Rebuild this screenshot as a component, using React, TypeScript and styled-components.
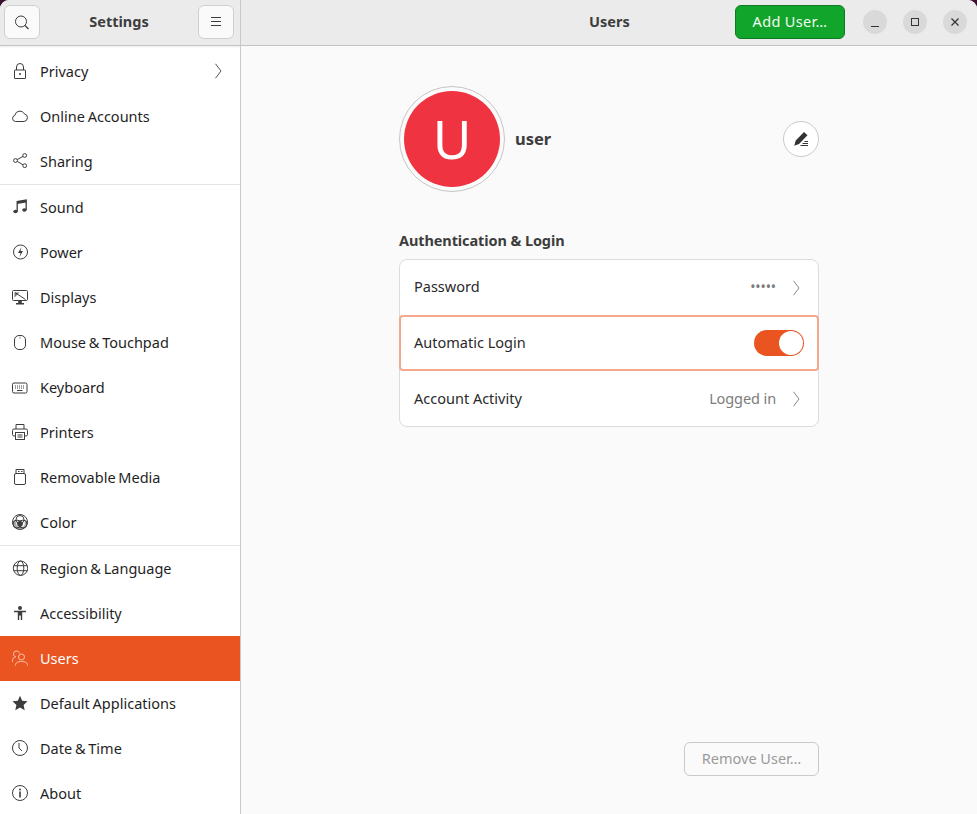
import React from "react";
import styled, { createGlobalStyle } from "styled-components";

const GlobalStyle = createGlobalStyle`
  html, body {
    margin: 0;
    padding: 0;
    height: 100%;
    background: #3b0f2f;
  }
  #root {
    height: 100%;
  }
`;

const sharedIcon = { width: 16, height: 16, viewBox: "0 0 16 16", fill: "none", stroke: "currentColor", strokeWidth: 1 };

const LockIcon = () => (
  <svg {...sharedIcon}>
    <path d="M4.500 7V4a3.500 3.500 0 0 1 7 0v3" />
    <rect x="2.500" y="7" width="11" height="8.500" rx="0.500" />
    <circle cx="8" cy="11" r="1" fill="currentColor" stroke="none" />
  </svg>
);
const CloudIcon = () => (
  <svg {...sharedIcon}>
    <path d="M3.500 13.500a3.100 3.100 0 0 1-.6-6.100A5 5 0 0 1 12.300 5.800a3.900 3.900 0 0 1-.3 7.700Z" />
  </svg>
);
const ShareIcon = () => (
  <svg {...sharedIcon}>
    <circle cx="3.500" cy="7.500" r="1.900" />
    <circle cx="12.700" cy="2.500" r="1.900" />
    <circle cx="12.700" cy="12.700" r="1.900" />
    <path d="M5.200 6.600 11 3.400M5.200 8.400l5.800 3.400" />
  </svg>
);
const NoteIcon = () => (
  <svg {...sharedIcon} strokeWidth={1.300}>
    <path d="M5.200 12.500V2.500l9-1.500v10" />
    <path d="M5.200 2.500l9-1.500v2.500l-9 1.500Z" fill="currentColor" stroke="none" />
    <ellipse cx="3.500" cy="12.500" rx="2.200" ry="1.700" fill="currentColor" stroke="none" />
    <ellipse cx="12.400" cy="11" rx="2.200" ry="1.700" fill="currentColor" stroke="none" />
  </svg>
);
const PowerIcon = () => (
  <svg {...sharedIcon}>
    <circle cx="8.500" cy="8" r="7" />
    <path d="M9.500 3 6 9h2.500l-1 4L11 7H8.500Z" fill="currentColor" stroke="none" />
  </svg>
);
const DisplayIcon = () => (
  <svg {...sharedIcon}>
    <rect x="0.500" y="1.500" width="15" height="10" rx="1" />
    <path d="M2.500 3.500h5l-5 5Z" fill="currentColor" stroke="none" opacity="0.7" />
    <path d="M3 3.500 13.500 10.500" />
    <path d="M4 15.500h8v-1.500H9.800v-2H6.200v2H4Z" fill="currentColor" stroke="none" />
  </svg>
);
const MouseIcon = () => (
  <svg {...sharedIcon}>
    <rect x="2.500" y="1.500" width="11" height="14" rx="4.500" />
    <path d="M8 2.500v2.500" opacity="0.5" />
  </svg>
);
const KeyboardIcon = () => (
  <svg {...sharedIcon}>
    <rect x="0.500" y="4" width="14.500" height="10" rx="1.500" />
    <path d="M3 7h9.500M3 9h9.500" strokeDasharray="1 1" />
    <path d="M5 11.500h5.500" />
  </svg>
);
const PrinterIcon = () => (
  <svg {...sharedIcon}>
    <path d="M4 5V.5h8V5" />
    <path d="M3.500 12H2a1.500 1.500 0 0 1-1.500-1.500V6.500A1.500 1.500 0 0 1 2 5h12a1.500 1.500 0 0 1 1.500 1.500v4A1.500 1.500 0 0 1 14 12h-1.500" />
    <rect x="3.500" y="8.500" width="9" height="7" />
    <path d="M5.500 11h5M5.500 13h5" />
  </svg>
);
const UsbIcon = () => (
  <svg {...sharedIcon}>
    <rect x="2.500" y="4.500" width="11" height="11" rx="1.500" />
    <path d="M4 4.500V.5h8v4" />
    <path d="M6 2.500h1.500M9 2.500h1.500" />
  </svg>
);
const ColorIcon = () => (
  <svg {...sharedIcon}>
    <circle cx="8" cy="8" r="7.500" />
    <circle cx="8" cy="5.500" r="4" />
    <circle cx="5" cy="10" r="4" />
    <circle cx="11" cy="10" r="4" />
    <path d="M2 6.500 1 8.500a7 7 0 0 0 7 6.800 7 7 0 0 0 7-6.800l-1-2-1.600 1.200a4 4 0 0 1-2 5.200H6.600a4 4 0 0 1-2-5.200Z" fill="currentColor" stroke="none" opacity="0.45" />
    <path d="M8 6.500a4 4 0 0 1 3 3.500 4 4 0 0 1-3 3.300A4 4 0 0 1 5 10a4 4 0 0 1 3-3.500Z" fill="currentColor" stroke="none" />
  </svg>
);
const GlobeIcon = () => (
  <svg {...sharedIcon}>
    <circle cx="8.500" cy="8.200" r="7.200" />
    <ellipse cx="8.500" cy="8.200" rx="3.300" ry="7.200" />
    <path d="M1.800 5.700h13.400M1.800 10.700h13.400" />
  </svg>
);
const AccessIcon = () => (
  <svg width="16" height="16" viewBox="0 0 16 16" fill="currentColor">
    <circle cx="8" cy="3" r="2" />
    <path d="M2 5.800h12v1.500h-3.800V15H8.800v-4.500H7.200V15H5.800V7.300H2Z" />
  </svg>
);
const UsersIcon = () => (
  <svg {...sharedIcon}>
    <circle cx="9.500" cy="7" r="3" />
    <path d="M3.500 15.500v-.6c0-2 2-3.400 6-3.400s6 1.400 6 3.400v.6" />
    <path d="M7.500 3.300A3 3 0 0 0 4.200 1a3 3 0 0 0-.5 5.900C2 7.300.5 8.400.5 10.500V12" />
  </svg>
);
const StarIcon = () => (
  <svg width="16" height="16" viewBox="0 0 16 16" fill="currentColor">
    <path d="M8 .8l2.200 4.900 5.300.6-3.900 3.600 1.100 5.300L8 12.500l-4.700 2.700 1.100-5.300L.5 6.300l5.300-.6Z" />
  </svg>
);
const ClockIcon = () => (
  <svg {...sharedIcon}>
    <circle cx="8" cy="8" r="7.500" />
    <path d="M7 3v5l3 3" />
  </svg>
);
const InfoIcon = () => (
  <svg {...sharedIcon}>
    <circle cx="8" cy="8" r="7.500" />
    <circle cx="8" cy="4.500" r="1" fill="currentColor" stroke="none" />
    <path d="M8 6.500v6" strokeWidth={1.600} />
  </svg>
);
const ChevronIcon = () => (
  <svg width="16" height="16" viewBox="0 0 16 16" fill="none" stroke="currentColor">
    <path d="M5.500 .8 11 8l-5.500 7.200" />
  </svg>
);

type NavItem = { label: string; icon: React.ReactNode; chevron?: boolean; active?: boolean };

const navGroups: NavItem[][] = [
  [
    { label: "Privacy", icon: <LockIcon />, chevron: true },
    { label: "Online Accounts", icon: <CloudIcon /> },
    { label: "Sharing", icon: <ShareIcon /> },
  ],
  [
    { label: "Sound", icon: <NoteIcon /> },
    { label: "Power", icon: <PowerIcon /> },
    { label: "Displays", icon: <DisplayIcon /> },
    { label: "Mouse & Touchpad", icon: <MouseIcon /> },
    { label: "Keyboard", icon: <KeyboardIcon /> },
    { label: "Printers", icon: <PrinterIcon /> },
    { label: "Removable Media", icon: <UsbIcon /> },
    { label: "Color", icon: <ColorIcon /> },
  ],
  [
    { label: "Region & Language", icon: <GlobeIcon /> },
    { label: "Accessibility", icon: <AccessIcon /> },
    { label: "Users", icon: <UsersIcon />, active: true },
    { label: "Default Applications", icon: <StarIcon /> },
    { label: "Date & Time", icon: <ClockIcon /> },
    { label: "About", icon: <InfoIcon /> },
  ],
];

export default function App() {
  return (
    <>
      <GlobalStyle />
      <Window>
        <LeftHeader>
          <HeaderButton aria-label="Search">
            <svg width="16" height="16" viewBox="0 0 16 16" fill="none" stroke="#3d3d3d">
              <circle cx="7" cy="7.500" r="5.500" />
              <path d="m11 11.500 3.500 3.500" strokeWidth="1.300" />
            </svg>
          </HeaderButton>
          <HeaderTitle>Settings</HeaderTitle>
          <HeaderButton aria-label="Menu">
            <svg width="16" height="16" viewBox="0 0 16 16" stroke="#3d3d3d">
              <path d="M3 3.500h10M3 7.500h10M3 11.500h10" />
            </svg>
          </HeaderButton>
        </LeftHeader>
        <RightHeader>
          <CenterTitle>Users</CenterTitle>
          <AddButton>Add User…</AddButton>
          <WindowControls>
            <RoundControl aria-label="Minimize">
              <svg width="16" height="16" viewBox="0 0 16 16" stroke="#333">
                <path d="M4 12.500h8" />
              </svg>
            </RoundControl>
            <RoundControl aria-label="Maximize">
              <svg width="16" height="16" viewBox="0 0 16 16" fill="none" stroke="#333">
                <rect x="4.500" y="4.500" width="7" height="7" />
              </svg>
            </RoundControl>
            <RoundControl aria-label="Close">
              <svg width="16" height="16" viewBox="0 0 16 16" stroke="#333" strokeWidth="1.200">
                <path d="m4.500 4.500 7 7M11.500 4.500l-7 7" />
              </svg>
            </RoundControl>
          </WindowControls>
        </RightHeader>

        <Sidebar>
          {navGroups.map((group, i) => (
            <NavGroup key={i}>
              {group.map((item) => (
                <NavRow key={item.label} $active={item.active}>
                  <NavIcon $active={item.active}>{item.icon}</NavIcon>
                  <NavLabel>{item.label}</NavLabel>
                  {item.chevron && (
                    <NavChevron>
                      <ChevronIcon />
                    </NavChevron>
                  )}
                </NavRow>
              ))}
            </NavGroup>
          ))}
        </Sidebar>

        <Content>
          <Column>
            <ProfileRow>
              <AvatarRing>
                <Avatar>U</Avatar>
              </AvatarRing>
              <UserName>user</UserName>
              <EditButton aria-label="Edit name">
                <svg width="16" height="16" viewBox="0 0 16 16">
                  <path d="M11 1 14.500 4.200 6 13 1.200 14.800 2.800 9.500Z" fill="#333" />
                  <path d="M7.500 14.500h7.500M9.500 12.500h5.500M11.500 10.500h3.500" stroke="#333" />
                </svg>
              </EditButton>
            </ProfileRow>
            <SectionTitle>Authentication &amp; Login</SectionTitle>
            <ListBox>
              <ListRow>
                <RowLabel $raised>Password</RowLabel>
                <PasswordDots aria-label="password">•••••</PasswordDots>
                <RowChevron>
                  <ChevronIcon />
                </RowChevron>
              </ListRow>
              <HighlightRow>
                <RowLabel>Automatic Login</RowLabel>
                <Toggle>
                  <ToggleKnob />
                </Toggle>
              </HighlightRow>
              <ListRow>
                <RowLabel>Account Activity</RowLabel>
                <RowValue>Logged in</RowValue>
                <RowChevron>
                  <ChevronIcon />
                </RowChevron>
              </ListRow>
            </ListBox>
            <Spacer />
            <RemoveRow>
              <RemoveButton disabled>Remove User…</RemoveButton>
            </RemoveRow>
          </Column>
        </Content>
      </Window>
    </>
  );
}

const fontStack = `"Noto Sans", "Open Sans", sans-serif`;

const Window = styled.div`
  width: 977px;
  height: 814px;
  overflow: hidden;
  display: grid;
  grid-template-columns: 241px 1fr;
  grid-template-rows: 46px 1fr;
  font-family: ${fontStack};
  font-size: 14.5px;
  color: #303030;
  background: #fafafa;
  border-radius: 9px 9px 0 0;
`;

const LeftHeader = styled.header`
  display: flex;
  align-items: center;
  justify-content: space-between;
  padding: 0 6px 1px 4px;
  background: #ebebeb;
  border-bottom: 1px solid #c4c4c4;
  border-right: 1px solid #c8c8c8;
  box-sizing: border-box;
`;

const RightHeader = styled.header`
  position: relative;
  display: flex;
  align-items: center;
  justify-content: flex-end;
  padding: 0 10px 1px 0;
  background: #ebebeb;
  border-bottom: 1px solid #c4c4c4;
  box-sizing: border-box;
`;

const HeaderButton = styled.button`
  width: 36px;
  height: 34px;
  padding: 0;
  display: flex;
  align-items: center;
  justify-content: center;
  background: #fafafa;
  border: 1px solid #cfcfcf;
  border-radius: 6px;
`;

const HeaderTitle = styled.h1`
  margin: 0 0 2px;
  font-size: 14.5px;
  font-weight: 700;
  color: #3d3d3d;
`;

const CenterTitle = styled(HeaderTitle)`
  position: absolute;
  left: 348px;
`;

const AddButton = styled.button`
  width: 110px;
  height: 34px;
  padding: 0 0 2px;
  margin-right: 18px;
  font-family: ${fontStack};
  font-size: 14.5px;
  letter-spacing: 0.35px;
  color: #f2fbf2;
  background: #12a52c;
  border: 1px solid #0c7a20;
  border-radius: 6px;
`;

const WindowControls = styled.div`
  display: flex;
  gap: 16px;
`;

const RoundControl = styled.button`
  width: 24px;
  height: 24px;
  padding: 0;
  display: flex;
  align-items: center;
  justify-content: center;
  background: #d9d9d9;
  border: none;
  border-radius: 50%;
`;

const Sidebar = styled.nav`
  background: #ffffff;
  border-right: 1px solid #c8c8c8;
  padding-top: 3px;
  overflow: hidden;
  box-shadow: inset 0 2px 2px -1px rgba(0, 0, 0, 0.08);
`;

const NavGroup = styled.div`
  & + & {
    border-top: 1px solid #e4e4e4;
  }
`;

const NavRow = styled.div<{ $active?: boolean }>`
  height: 45px;
  display: flex;
  align-items: center;
  padding: 0 14px 0 12px;
  color: ${({ $active }) => ($active ? "#ffffff" : "#1f1f1f")};
  background: ${({ $active }) => ($active ? "#e95420" : "transparent")};
`;

const NavIcon = styled.span<{ $active?: boolean }>`
  width: 16px;
  height: 16px;
  margin: 0 12px 1px 0;
  display: flex;
  color: ${({ $active }) => ($active ? "#f9c4ae" : "#3d3d3d")};
`;

const NavLabel = styled.span`
  flex: 1;
  margin-bottom: 2px;
  word-spacing: -1px;
`;

const NavChevron = styled.span`
  display: flex;
  margin-bottom: 1px;
  color: #555;
`;

const Content = styled.main`
  display: flex;
  justify-content: center;
  background: #fafafa;
  padding-right: 1px;
`;

const Column = styled.div`
  width: 420px;
  margin-left: 1px;
  display: flex;
  flex-direction: column;
  padding-top: 40px;
`;

const ProfileRow = styled.div`
  display: flex;
  align-items: center;
`;

const AvatarRing = styled.div`
  width: 106px;
  height: 106px;
  box-sizing: border-box;
  border: 1px solid #c6c6c6;
  border-radius: 50%;
  padding: 4px;
`;

const Avatar = styled.div`
  width: 100%;
  height: 100%;
  display: flex;
  align-items: center;
  justify-content: center;
  background: #ef3340;
  border-radius: 50%;
  color: #ffffff;
  font-size: 53px;
  font-weight: 400;
  padding-bottom: 2px;
  box-sizing: border-box;
`;

const UserName = styled.span`
  flex: 1;
  margin: 0 0 2px 10px;
  font-size: 16.5px;
  font-weight: 700;
  color: #3d3d3d;
`;

const EditButton = styled.button`
  width: 36px;
  height: 36px;
  padding: 0;
  display: flex;
  align-items: center;
  justify-content: center;
  background: #ffffff;
  border: 1px solid #c9c9c9;
  border-radius: 50%;
`;

const SectionTitle = styled.h2`
  margin: 38px 0 9px;
  font-size: 14.5px;
  line-height: 20px;
  font-weight: 700;
  letter-spacing: -0.1px;
  color: #3d3d3d;
`;

const ListBox = styled.div`
  background: #ffffff;
  border: 1px solid #dcdcdc;
  border-radius: 8px;
`;

const ListRow = styled.div`
  height: 55px;
  display: flex;
  align-items: center;
  padding: 0 14px;
`;

const HighlightRow = styled(ListRow)`
  height: 56px;
  box-sizing: border-box;
  margin: 0 -1px;
  padding: 0 13px 0 13px;
  border: 2px solid #f5a88d;
  border-radius: 4px;
`;

const RowLabel = styled.span<{ $raised?: boolean }>`
  flex: 1;
  margin-bottom: ${({ $raised }) => ($raised ? "4px" : "2px")};
  color: #2a2a2a;
`;

const RowValue = styled.span`
  margin: 0 1px 2px 0;
  color: #7c7c7c;
  letter-spacing: -0.1px;
`;

const PasswordDots = styled(RowValue)`
  font-size: 14px;
  letter-spacing: -0.1px;
`;

const RowChevron = styled.span`
  display: flex;
  margin: 0 0 0 11px;
  color: #888;
`;

const Toggle = styled.div`
  width: 50px;
  height: 26px;
  box-sizing: border-box;
  padding: 1px;
  display: flex;
  justify-content: flex-end;
  background: #e95420;
  border-radius: 13px;
`;

const ToggleKnob = styled.div`
  width: 24px;
  height: 24px;
  background: #ffffff;
  border-radius: 50%;
`;

const Spacer = styled.div`
  flex: 1;
`;

const RemoveRow = styled.div`
  display: flex;
  justify-content: flex-end;
  padding-bottom: 38px;
`;

const RemoveButton = styled.button`
  width: 135px;
  height: 34px;
  padding: 0 0 2px;
  font-family: ${fontStack};
  font-size: 14.5px;
  color: #9a9a9a;
  background: #fafafa;
  border: 1px solid #c9c9c9;
  border-radius: 6px;
`;
